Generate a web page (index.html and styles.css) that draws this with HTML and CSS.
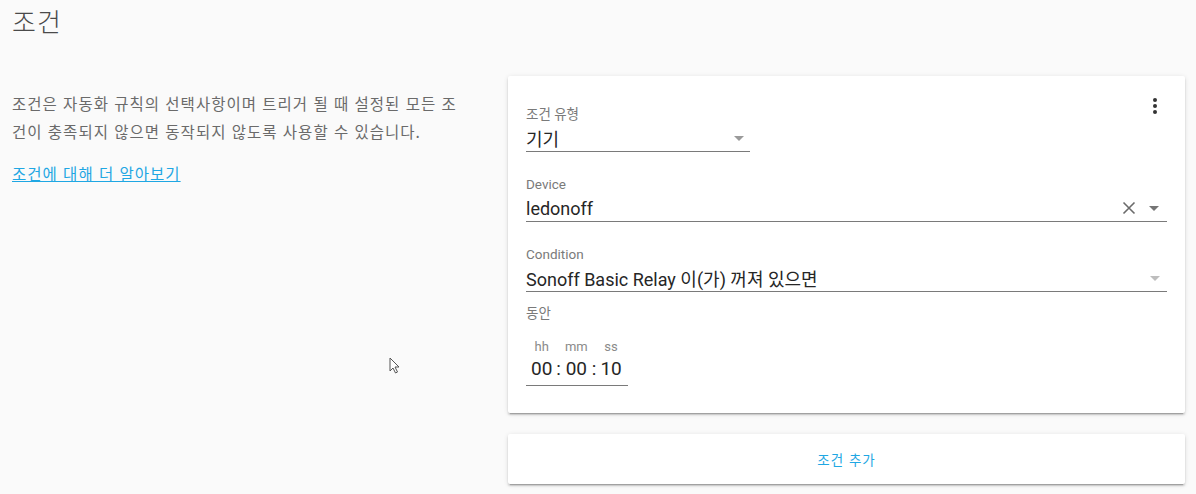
FILE: index.html
```html
<!DOCTYPE html>
<html lang="ko">
<head>
<meta charset="utf-8">
<link rel="stylesheet" href="styles.css">
</head>
<body>
<div class="page">
  <h1 class="title">조건</h1>
  <div class="row">
    <div class="intro">
      <p class="desc">조건은 자동화 규칙의 선택사항이며 트리거 될 때 설정된 모든 조건이 충족되지 않으면 동작되지 않도록 사용할 수 있습니다.</p>
      <a class="learn" href="#">조건에 대해 더 알아보기</a>
    </div>
    <div class="cards">
      <div class="card">
        <div class="menu"><span></span><span></span><span></span></div>
        <div class="field short">
          <div class="label">조건 유형</div>
          <div class="value"><span class="vtext">기기</span><span class="arrow"></span></div>
        </div>
        <div class="field">
          <div class="label">Device</div>
          <div class="value"><span class="vtext">ledonoff</span>
            <svg class="clear" width="14" height="14" viewBox="0 0 14 14"><path d="M1.5 1.5 L12.5 12.5 M12.5 1.5 L1.5 12.5" stroke="#6b6b6b" stroke-width="1.6" fill="none"/></svg>
            <span class="arrow"></span></div>
        </div>
        <div class="field">
          <div class="label">Condition</div>
          <div class="value"><span class="vtext">Sonoff Basic Relay 이(가) 꺼져 있으면</span><span class="arrow light"></span></div>
        </div>
        <div class="dur-label">동안</div>
        <div class="time">
          <div class="unit"><span class="ulabel">hh</span><span class="digits">00</span></div>
          <div class="unit sep"><span class="ulabel">&nbsp;</span><span class="digits">:</span></div>
          <div class="unit"><span class="ulabel">mm</span><span class="digits">00</span></div>
          <div class="unit sep"><span class="ulabel">&nbsp;</span><span class="digits">:</span></div>
          <div class="unit"><span class="ulabel">ss</span><span class="digits">10</span></div>
        </div>
      </div>
      <div class="card add">조건 추가</div>
    </div>
  </div>
</div>
<svg class="cursor" width="12" height="18" viewBox="0 0 12 18"><path d="M1 1 L1 14 L4 11 L6.5 16 L8.5 15 L6 10 L10 10 Z" fill="#fff" stroke="#555" stroke-width="1"/></svg>
</body>
</html>
```

FILE: styles.css
```css
html, body {
  margin: 0;
  padding: 0;
  background: #fafafa;
  font-family: Roboto, "Noto Sans CJK KR", sans-serif;
  width: 1196px;
  height: 494px;
  overflow: hidden;
}
.page {
  padding-left: 12px;
}
.title {
  margin: 0;
  padding-top: 5px;
  height: 71px;
  font-size: 26px;
  line-height: 32px;
  font-weight: 300;
  color: #4a4a4a;
  letter-spacing: 1px;
  font-family: "Noto Sans CJK KR", sans-serif;
}
.row {
  display: flex;
}
.intro {
  width: 496px;
  flex: none;
  padding-top: 13px;
}
.desc {
  margin: 0;
  width: 452px;
  font-size: 15.5px;
  line-height: 28px;
  letter-spacing: 1px;
  word-break: break-all;
  color: #6a6a6a;
  font-family: "Noto Sans CJK KR", sans-serif;
}
.learn {
  display: inline-block;
  margin-top: 14px;
  font-size: 15.5px;
  line-height: 28px;
  letter-spacing: 1px;
  color: #1fa7e3;
  font-family: "Noto Sans CJK KR", sans-serif;
}
.cards {
  width: 677px;
  flex: none;
}
.card {
  position: relative;
  background: #fff;
  border-radius: 2px;
  box-shadow: 0 2px 2px rgba(0,0,0,.14), 0 1px 5px rgba(0,0,0,.12), 0 3px 1px -2px rgba(0,0,0,.2);
  padding: 29px 18px 27px 18px;
}
.menu {
  position: absolute;
  top: 22px;
  right: 28px;
  display: flex;
  flex-direction: column;
  gap: 2px;
}
.menu span {
  width: 4px;
  height: 4px;
  border-radius: 50%;
  background: #333;
}
.field + .field {
  margin-top: 23px;
}
.field.short {
  width: 224px;
}
.label {
  font-size: 13.5px;
  line-height: 18px;
  color: #7a7a7a;
  margin-bottom: 2px;
}
.value {
  display: flex;
  align-items: center;
  height: 26px;
  font-size: 18px;
  color: #262626;
  border-bottom: 1px solid #7a7a7a;
}
.vtext {
  flex: 1;
  white-space: nowrap;
}
.clear {
  margin-right: 13px;
}
.arrow {
  width: 0;
  height: 0;
  border-left: 5px solid transparent;
  border-right: 5px solid transparent;
  border-top: 5px solid #757575;
  margin-right: 8px;
}
.arrow.light {
  border-top-color: #bdbdbd;
  margin-right: 7px;
}
.field.short .arrow {
  border-top-color: #9a9a9a;
  margin-right: 6px;
}
.dur-label {
  margin-top: 11px;
  font-size: 13.5px;
  line-height: 18px;
  color: #7a7a7a;
  font-family: "Noto Sans CJK KR", sans-serif;
}
.time {
  display: inline-flex;
  margin-top: 18px;
  padding: 0 6px 3px 5px;
  border-bottom: 1px solid #7a7a7a;
}
.unit {
  display: flex;
  flex-direction: column;
  align-items: center;
}
.sep {
  padding: 0 4px;
}
.ulabel {
  font-size: 13px;
  line-height: 16px;
  color: #8a8a8a;
}
.digits {
  font-size: 19px;
  line-height: 27px;
  color: #262626;
}
.card.add {
  margin-top: 21px;
  height: 50px;
  padding: 0;
  display: flex;
  align-items: center;
  justify-content: center;
  font-size: 13.5px;
  letter-spacing: 1px;
  color: #1fa7e3;
  font-family: "Noto Sans CJK KR", sans-serif;
}
.cursor {
  position: absolute;
  left: 389px;
  top: 357px;
}
```
